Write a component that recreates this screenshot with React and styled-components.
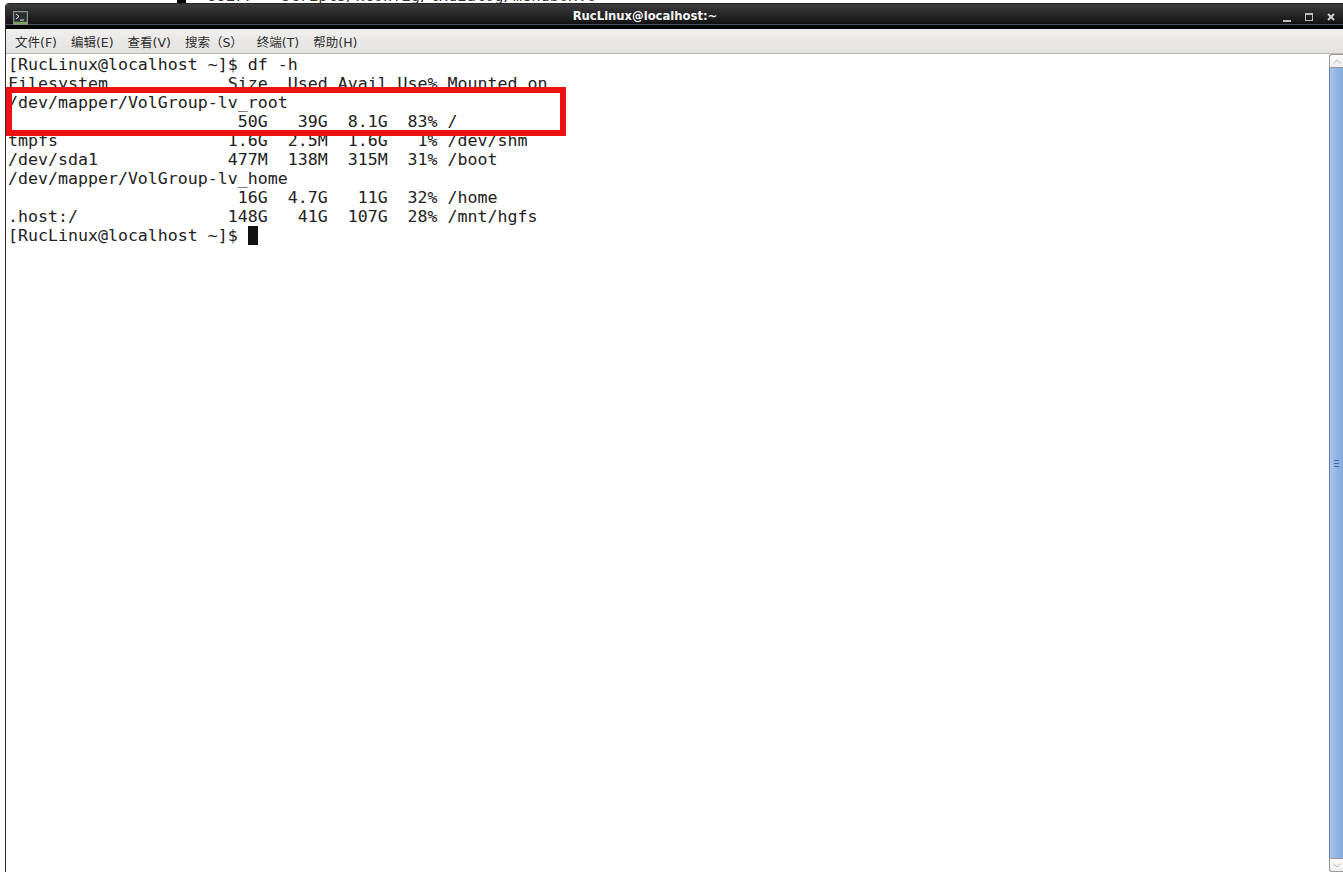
import React from 'react';
import styled, { createGlobalStyle } from 'styled-components';

const Global = createGlobalStyle`
  html, body { margin: 0; padding: 0; background: #fff; overflow: hidden; }
  #root { height: 872px; }
`;

const Page = styled.div`
  display: flex;
  flex-direction: column;
  width: 1343px;
  height: 872px;
  overflow: hidden;
  background: #fff;
`;

const BackdropStrip = styled.div`
  flex: none;
  height: 3px;
  padding-left: 177px;
  display: flex;
  gap: 21px;
  overflow: hidden;
  font-family: 'DejaVu Sans Mono', monospace;
  font-size: 15.4px;
  line-height: 19px;
  color: #333;
`;

const Bullet = styled.div`
  width: 9px;
  height: 4px;
  background: #000;
`;

const BackdropText = styled.pre`
  margin: -13px 0 0;
  font: inherit;
`;

const Win = styled.div`
  flex: 1;
  min-height: 0;
  margin-left: 5px;
  display: flex;
  flex-direction: column;
  background: #fff;
  border-left: 1px solid #2a2a2a;
  border-top-left-radius: 4px;
  overflow: hidden;
  position: relative;
`;

const TitleBar = styled.div`
  flex: none;
  height: 22px;
  box-sizing: border-box;
  display: flex;
  align-items: center;
  padding: 8px 6px 0 7px;
  background: linear-gradient(#0c0c0c 0, #3b3b3b 1px, #2a2a2a 10px, #151515 20px, #0d0d0d 100%);
  border-bottom: 1px solid #43566e;
  box-shadow: 0 4px 0 #050505;
`;

const Title = styled.div`
  flex: 1;
  text-align: center;
  padding-right: 21px;
  margin-top: -3px;
  font-family: 'DejaVu Sans', sans-serif;
  font-weight: bold;
  font-size: 11.6px;
  color: #f4f4f4;
`;

const WinButtons = styled.div`
  display: flex;
  align-items: center;
  gap: 14px;
  margin-right: 2px;
  margin-top: -1px;
`;

const MenuBar = styled.div`
  flex: none;
  height: 25px;
  margin-top: 4px;
  box-sizing: border-box;
  display: flex;
  align-items: center;
  gap: 14px;
  padding-left: 9px;
  background: linear-gradient(#f0efee, #e3e2e0);
  border-bottom: 1px solid #b9b8b6;
  font-family: 'DejaVu Sans', 'Noto Sans CJK SC', sans-serif;
  font-size: 12.5px;
  color: #2e2e2e;
`;

const MenuItem = styled.span`
  white-space: pre;
`;

const TermArea = styled.div`
  flex: 1;
  min-height: 0;
  display: flex;
`;

const Term = styled.pre`
  flex: 1;
  margin: 0;
  padding: 1px 0 0 2px;
  font-family: 'DejaVu Sans Mono', monospace;
  font-size: 16.6px;
  line-height: 19px;
  color: #222;
`;

const Cursor = styled.span`
  display: inline-block;
  width: 10px;
  height: 19px;
  vertical-align: top;
  background: #111;
`;

const Scrollbar = styled.div`
  flex: none;
  width: 14px;
  display: flex;
  flex-direction: column;
`;

const ScrollBtn = styled.div`
  flex: none;
  height: 14px;
  box-sizing: border-box;
  display: flex;
  align-items: center;
  justify-content: center;
  background: linear-gradient(#fdfdfd, #eeeeee);
  border: 1px solid #9a9a9a;
  border-right: none;
  border-radius: ${p => (p.$top ? '3px 0 0 0' : '0 0 0 3px')};
`;

const Thumb = styled.div`
  flex: 1;
  display: flex;
  flex-direction: column;
  align-items: center;
  justify-content: center;
  gap: 2px;
  box-sizing: border-box;
  background: linear-gradient(90deg, #a9c6ec, #90b4e3 50%, #85abdd);
  border-left: 1px solid #5f81b3;
`;

const Grip = styled.span`
  width: 5px;
  height: 1px;
  background: #4a6c9e;
`;

const RedBox = styled.div`
  position: absolute;
  left: 0;
  top: 84px;
  width: 560px;
  height: 49px;
  box-sizing: border-box;
  border: 6px solid #ee1111;
`;

const TerminalIcon = () => (
  <svg width="15" height="14" viewBox="0 0 15 14">
    <rect x="0.5" y="0.5" width="14" height="13" fill="#5a6260" stroke="#8a8f8c" />
    <rect x="1.5" y="1.5" width="12" height="9" fill="#2b3130" />
    <rect x="1" y="11" width="13" height="2" fill="#7aa35a" />
    <path d="M3 3l3 2.5-3 2.5" fill="none" stroke="#e6e6e6" strokeWidth="1" />
    <path d="M7 9h4" stroke="#e6e6e6" strokeWidth="1" />
  </svg>
);

const MinIcon = () => (
  <svg width="8" height="9" viewBox="0 0 8 9">
    <rect x="0" y="7" width="8" height="2" fill="#bdbdbd" />
  </svg>
);

const MaxIcon = () => (
  <svg width="8" height="8" viewBox="0 0 8 8">
    <rect x="0.5" y="0.5" width="7" height="7" fill="none" stroke="#bdbdbd" />
    <rect x="0" y="0" width="8" height="2" fill="#bdbdbd" />
  </svg>
);

const CloseIcon = () => (
  <svg width="8" height="8" viewBox="0 0 8 8">
    <path d="M1 1l6 6M7 1l-6 6" stroke="#cfcfcf" strokeWidth="2" />
  </svg>
);

const Chevron = ({ up }) => (
  <svg width="8" height="5" viewBox="0 0 8 5">
    <path d={up ? 'M0.5 4.5L4 1l3.5 3.5' : 'M0.5 0.5L4 4l3.5-3.5'} fill="none" stroke="#b5b5b5" />
  </svg>
);

const menus = ['文件(F)', '编辑(E)', '查看(V)', '搜索（S）', '终端(T)', '帮助(H)'];

const lines = [
  '[RucLinux@localhost ~]$ df -h',
  'Filesystem            Size  Used Avail Use% Mounted on',
  '/dev/mapper/VolGroup-lv_root',
  '                       50G   39G  8.1G  83% /',
  'tmpfs                 1.6G  2.5M  1.6G   1% /dev/shm',
  '/dev/sda1             477M  138M  315M  31% /boot',
  '/dev/mapper/VolGroup-lv_home',
  '                       16G  4.7G   11G  32% /home',
  '.host:/               148G   41G  107G  28% /mnt/hgfs',
];

export default function App() {
  return (
    <Page>
      <Global />
      <BackdropStrip>
        <Bullet />
        <BackdropText>UUL77   scripts/kconfig/lxdialog/menubox.o</BackdropText>
      </BackdropStrip>
      <Win>
        <TitleBar>
          <TerminalIcon />
          <Title>RucLinux@localhost:~</Title>
          <WinButtons>
            <MinIcon />
            <MaxIcon />
            <CloseIcon />
          </WinButtons>
        </TitleBar>
        <MenuBar>
          {menus.map(m => <MenuItem key={m}>{m}</MenuItem>)}
        </MenuBar>
        <TermArea>
          <Term>
            {lines.join('\n')}
            {'\n[RucLinux@localhost ~]$ '}
            <Cursor />
          </Term>
          <Scrollbar>
            <ScrollBtn $top><Chevron up /></ScrollBtn>
            <Thumb><Grip /><Grip /><Grip /></Thumb>
            <ScrollBtn><Chevron /></ScrollBtn>
          </Scrollbar>
        </TermArea>
        <RedBox />
      </Win>
    </Page>
  );
}
